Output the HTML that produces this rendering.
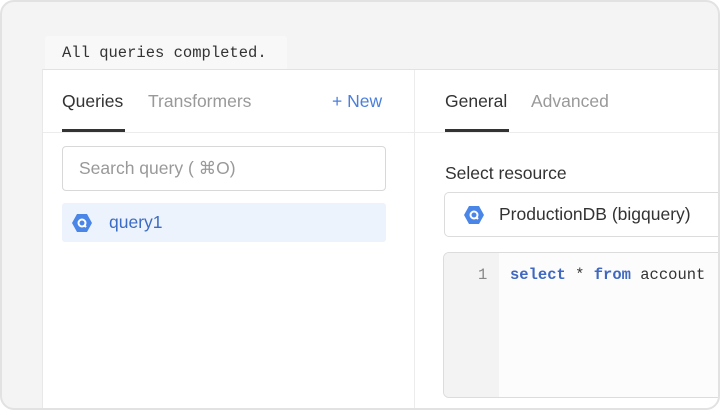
<!DOCTYPE html>
<html><head><style>
*{box-sizing:border-box;margin:0;padding:0}
body{width:720px;height:410px;overflow:hidden;background:#fff;font-family:"Liberation Sans",sans-serif}
.card{position:absolute;left:0;top:0;width:720px;height:410px;border:2px solid #e2e2e2;border-radius:14px;background:#f4f4f4;overflow:hidden}
.status{position:absolute;left:43px;top:34px;width:242px;height:35px;background:#f8f8f8;border-radius:3px 3px 0 0;font-family:"Liberation Mono",monospace;font-size:15.5px;color:#333;padding:8px 0 0 17px}
.panel{position:absolute;left:40px;top:67px;width:680px;height:345px;background:#fff;border-top:1px solid #e2e2e2;border-left:1px solid #e8e8e8}
.vdiv{position:absolute;left:371px;top:0;width:1px;height:345px;background:#ececec}
.hdiv{position:absolute;left:0;top:62px;width:371px;height:1px;background:#ececec}
.hdiv2{position:absolute;left:372px;top:62px;width:310px;height:1px;background:#ececec}
.tab{position:absolute;top:21px;font-size:17.5px;color:#999}
.act{color:#333}
.ul{position:absolute;top:59px;height:3px;background:#333}
.search{position:absolute;left:19px;top:76px;width:324px;height:45px;border:1px solid #d8d8d8;border-radius:4px;font-size:17.5px;color:#999;padding:11px 0 0 16px}
.row{position:absolute;left:19px;top:133px;width:324px;height:39px;background:#edf3fc;border-radius:3px}
.hex{position:absolute;width:20px;height:20px}
.label{position:absolute;left:402px;top:93px;font-size:17.5px;color:#333}
.sel{position:absolute;left:401px;top:122px;width:300px;height:45px;border:1px solid #dcdcdc;border-radius:5px;font-size:17.5px;color:#333;padding:11px 0 0 54px}
.ed{position:absolute;left:400px;top:182px;width:300px;height:146px;border:1px solid #dcdcdc;border-radius:6px;background:#fcfcfc;overflow:hidden}
.gut{position:absolute;left:0;top:0;width:55px;height:100%;background:#f3f3f3}
.code{position:absolute;top:13px;font-family:"Liberation Mono",monospace;font-size:15.5px;color:#333}
.kw{color:#4068c0;font-weight:bold}
</style></head><body>
<div class="card">
<div class="status">All queries completed.</div>
<div class="panel">
<div class="vdiv"></div><div class="hdiv"></div><div class="hdiv2"></div>
<div class="tab act" style="left:19px">Queries</div>
<div class="tab" style="left:105px">Transformers</div>
<div class="tab" style="left:289px;color:#4a7fdc">+ New</div>
<div class="ul" style="left:19px;width:63px"></div>
<div class="search">Search query ( ⌘O)</div>
<div class="row">
<svg class="hex" style="left:10px;top:10px" viewBox="0 0 20 20"><polygon points="5,1 15,1 20,10 15,19 5,19 0,10" fill="#4a86e8"/><circle cx="10" cy="10" r="3.5" fill="none" stroke="#fff" stroke-width="2"/><line x1="12" y1="12" x2="14" y2="14" stroke="#fff" stroke-width="2"/></svg>
<div style="position:absolute;left:47px;top:9px;font-size:17.5px;color:#3b6bc4">query1</div>
</div>
<div class="tab act" style="left:402px">General</div>
<div class="tab" style="left:488px">Advanced</div>
<div class="ul" style="left:402px;width:64px"></div>
<div class="label">Select resource</div>
<div class="sel"><svg class="hex" style="left:19px;top:12px" viewBox="0 0 20 20"><polygon points="5,1 15,1 20,10 15,19 5,19 0,10" fill="#4a86e8"/><circle cx="10" cy="10" r="3.5" fill="none" stroke="#fff" stroke-width="2"/><line x1="12" y1="12" x2="14" y2="14" stroke="#fff" stroke-width="2"/></svg>ProductionDB (bigquery)</div>
<div class="ed"><div class="gut"></div>
<div class="code" style="left:34px;color:#888">1</div>
<div class="code" style="left:66px"><span class="kw">select</span> * <span class="kw">from</span> account</div>
</div>
</div>
</div>
</body></html>
